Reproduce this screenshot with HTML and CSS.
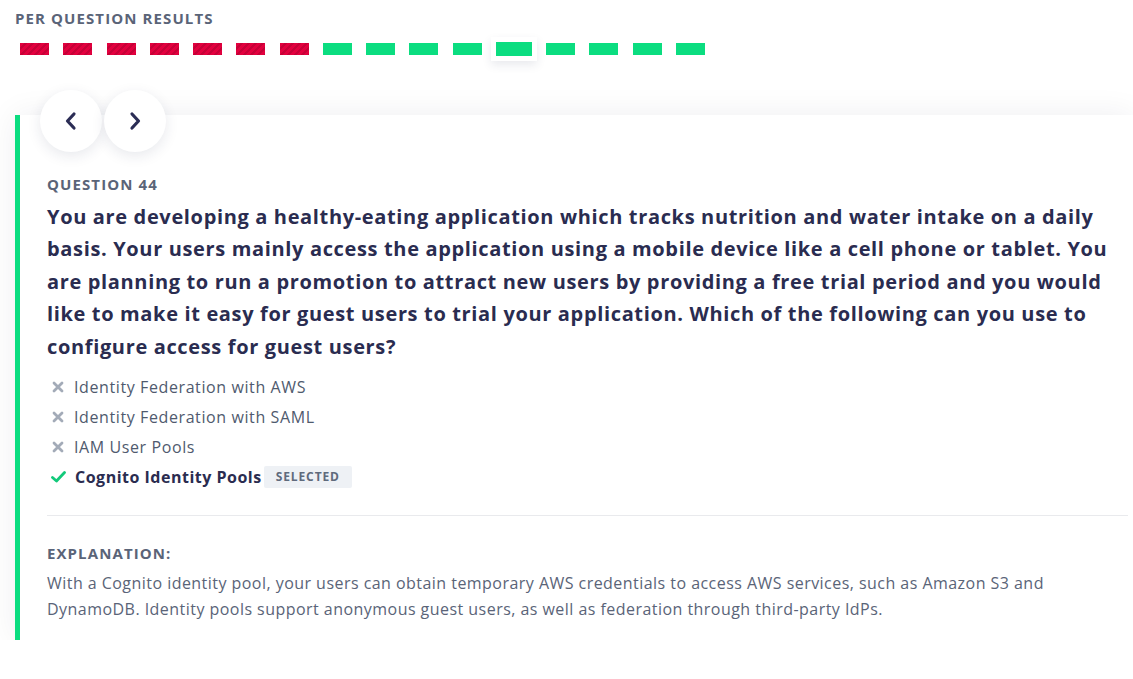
FILE: index.html
```html
<!DOCTYPE html>
<html>
<head>
<meta charset="utf-8">
<link rel="stylesheet" href="styles.css">
</head>
<body>
<div class="page">
  <h2 class="results-title">PER QUESTION RESULTS</h2>
  <div class="bars">
    <span class="bar wrong"></span>
    <span class="bar wrong"></span>
    <span class="bar wrong"></span>
    <span class="bar wrong"></span>
    <span class="bar wrong"></span>
    <span class="bar wrong"></span>
    <span class="bar wrong"></span>
    <span class="bar right"></span>
    <span class="bar right"></span>
    <span class="bar right"></span>
    <span class="bar right"></span>
    <span class="bar right active"></span>
    <span class="bar right"></span>
    <span class="bar right"></span>
    <span class="bar right"></span>
    <span class="bar right"></span>
  </div>

  <div class="card">
    <div class="nav">
      <button class="nav-btn" aria-label="Previous">
        <svg width="20" height="20" viewBox="0 0 20 20"><path d="M13 3 L6.5 10 L13 17" fill="none" stroke="#2b2d55" stroke-width="3.2" stroke-linecap="round" stroke-linejoin="round"/></svg>
      </button>
      <button class="nav-btn" aria-label="Next">
        <svg width="20" height="20" viewBox="0 0 20 20"><path d="M7 3 L13.5 10 L7 17" fill="none" stroke="#2b2d55" stroke-width="3.2" stroke-linecap="round" stroke-linejoin="round"/></svg>
      </button>
    </div>

    <div class="q-label">QUESTION 44</div>
    <p class="q-text">You are developing a healthy-eating application which tracks nutrition and water intake on a daily basis. Your users mainly access the application using a mobile device like a cell phone or tablet. You are planning to run a promotion to attract new users by providing a free trial period and you would like to make it easy for guest users to trial your application. Which of the following can you use to configure access for guest users?</p>

    <ul class="options">
      <li class="option">
        <svg class="ico" width="14" height="14" viewBox="0 0 14 14"><path d="M3 3 L11 11 M11 3 L3 11" stroke="#a3abb8" stroke-width="2.8" stroke-linecap="round"/></svg>
        <span>Identity Federation with AWS</span>
      </li>
      <li class="option">
        <svg class="ico" width="14" height="14" viewBox="0 0 14 14"><path d="M3 3 L11 11 M11 3 L3 11" stroke="#a3abb8" stroke-width="2.8" stroke-linecap="round"/></svg>
        <span>Identity Federation with SAML</span>
      </li>
      <li class="option">
        <svg class="ico" width="14" height="14" viewBox="0 0 14 14"><path d="M3 3 L11 11 M11 3 L3 11" stroke="#a3abb8" stroke-width="2.8" stroke-linecap="round"/></svg>
        <span>IAM User Pools</span>
      </li>
      <li class="option correct">
        <svg class="ico" width="15" height="14" viewBox="0 0 15 14"><path d="M1.5 7.5 L5.5 11 L13.5 2.5" fill="none" stroke="#12c97a" stroke-width="2.8" stroke-linecap="round" stroke-linejoin="round"/></svg>
        <span>Cognito Identity Pools</span>
        <span class="badge">SELECTED</span>
      </li>
    </ul>

    <div class="explanation">
      <div class="exp-label">EXPLANATION:</div>
      <p class="exp-text">With a Cognito identity pool, your users can obtain temporary AWS credentials to access AWS services, such as Amazon S3 and DynamoDB. Identity pools support anonymous guest users, as well as federation through third-party IdPs.</p>
    </div>
  </div>
</div>
</body>
</html>
```

FILE: styles.css
```css
* { box-sizing: border-box; }
html, body { margin: 0; padding: 0; background: #ffffff; }
body {
  font-family: "Open Sans", "Noto Sans", "Liberation Sans", sans-serif;
  color: #4f5a6e;
}
.page {
  padding: 8px 0 0 15px;
}
.results-title {
  margin: 0;
  font-size: 15px;
  line-height: 20px;
  font-weight: 700;
  letter-spacing: 1.1px;
  color: #5a6478;
}
.bars {
  display: flex;
  align-items: center;
  justify-content: space-between;
  width: 685px;
  margin: 13px 0 0 5px;
  height: 16px;
}
.bar {
  display: block;
  width: 29px;
  height: 12px;
}
.bar.wrong {
  background: repeating-linear-gradient(135deg, #e2003e 0 3px, #c70037 3px 5px);
}
.bar.right { background: #0bdd80; }
.bar.active {
  width: 36px;
  height: 14px;
  box-shadow: 0 0 0 5px #ffffff, 0 4px 10px 5px rgba(40, 50, 90, 0.10);
}
.card {
  position: relative;
  margin-top: 58px;
  background: #ffffff;
  border-left: 5px solid #0bdd80;
  box-shadow: 0 0 30px rgba(20, 30, 60, 0.07);
  padding: 59px 5px 18px 27px;
}
.nav {
  position: absolute;
  top: -25px;
  left: 20px;
  display: flex;
  gap: 2px;
}
.nav-btn {
  width: 62px;
  height: 62px;
  border-radius: 50%;
  border: none;
  background: #ffffff;
  box-shadow: 0 4px 14px rgba(30, 40, 80, 0.10);
  display: flex;
  align-items: center;
  justify-content: center;
  padding: 0;
  cursor: pointer;
}
.q-label {
  font-size: 15px;
  line-height: 20px;
  font-weight: 700;
  letter-spacing: 1.1px;
  color: #5a6478;
}
.q-text {
  margin: 7px 0 0 0;
  font-size: 20px;
  line-height: 32.4px;
  font-weight: 700;
  color: #2a2c50;
  letter-spacing: 0.65px;
}
.options {
  list-style: none;
  margin: 9px 0 0 0;
  padding: 0 0 23px 0;
  border-bottom: 1px solid #e9eaed;
}
.option {
  display: flex;
  align-items: center;
  height: 30px;
  font-size: 16px;
  letter-spacing: 0.6px;
  color: #4f5a6e;
}
.option .ico {
  margin: 0 9px 0 4px;
  flex: none;
}
.option.correct {
  font-weight: 700;
  color: #2a2c50;
  letter-spacing: 0.5px;
}
.badge {
  margin-left: 2px;
  background: #eef1f5;
  color: #5f6a7c;
  font-size: 12px;
  font-weight: 700;
  letter-spacing: 0.9px;
  line-height: 22px;
  padding: 0 12px 0 12px;
  border-radius: 2px;
}
.explanation {
  padding-top: 27px;
}
.exp-label {
  font-size: 15px;
  line-height: 20px;
  font-weight: 700;
  letter-spacing: 1.1px;
  color: #5a6478;
}
.exp-text {
  margin: 7px 0 0 0;
  font-size: 16px;
  line-height: 26px;
  letter-spacing: 0.46px;
  color: #5a6478;
}
```
